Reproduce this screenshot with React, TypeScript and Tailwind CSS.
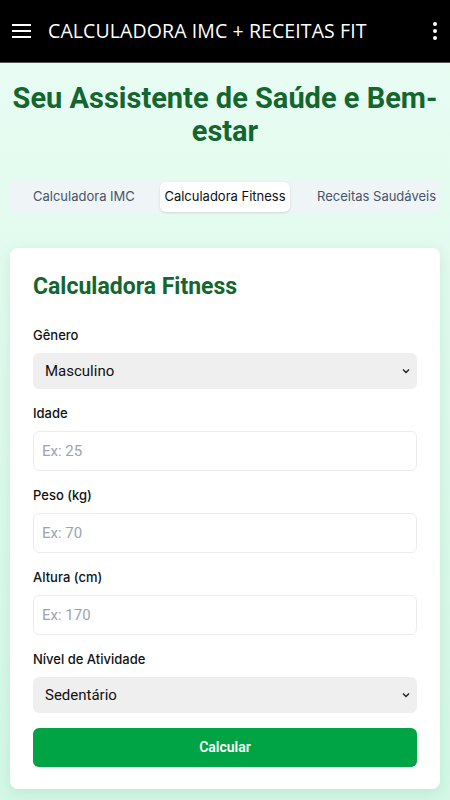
import React from "react";

function Field({ label, placeholder }: { label: string; placeholder: string }) {
  return (
    <div className="flex flex-col">
      <label className="text-[13px] font-medium text-[#111] mb-[10px] leading-[16px]" style={{ fontFamily: "Inter, sans-serif" }}>{label}</label>
      <div className="h-[40px] rounded-md border border-[#ececec] bg-white flex items-center px-[8px] text-[15px] text-[#9ca3af]" style={{ fontFamily: "Roboto, sans-serif" }}>
        {placeholder}
      </div>
    </div>
  );
}

function SelectBox({ label, value }: { label: string; value: string }) {
  return (
    <div className="flex flex-col">
      <label className="text-[13px] font-medium text-[#111] mb-[10px] leading-[16px]" style={{ fontFamily: "Inter, sans-serif" }}>{label}</label>
      <div className="h-[36px] rounded-md bg-[#efefef] flex items-center justify-between pl-[12px] pr-[6px] text-[15px] text-[#111]" style={{ fontFamily: "Roboto, sans-serif" }}>
        <span>{value}</span>
        <svg width="10" height="10" viewBox="0 0 10 10" fill="none" stroke="#222" strokeWidth="1.4"><path d="M2 3.5 L5 6.5 L8 3.5" /></svg>
      </div>
    </div>
  );
}

export default function App() {
  return (
    <div className="w-[450px] h-[800px] overflow-hidden bg-gradient-to-b from-[#e9fcf3] to-[#d4f8e6] flex flex-col">
      <div className="h-[63px] bg-black flex items-center border-b border-[#555] shrink-0">
        <svg className="ml-[12px]" width="19" height="14" viewBox="0 0 19 14"><rect x="0" y="0" width="19" height="2" fill="#fff" /><rect x="0" y="6" width="19" height="2" fill="#fff" /><rect x="0" y="12" width="19" height="2" fill="#fff" /></svg>
        <div className="ml-[17px] text-white text-[19.5px] tracking-[0.1px]" style={{ fontFamily: "'Open Sans', sans-serif" }}>CALCULADORA IMC + RECEITAS FIT</div>
        <div className="ml-auto mr-[13px] flex flex-col gap-[3px]">
          <span className="w-[4px] h-[4px] rounded-full bg-white" />
          <span className="w-[4px] h-[4px] rounded-full bg-white" />
          <span className="w-[4px] h-[4px] rounded-full bg-white" />
        </div>
      </div>
      <div className="px-[10px]">
        <h1 className="mt-[19px] -mx-[10px] text-center text-[29px] font-bold leading-[33px] text-[#14662f]" style={{ fontFamily: "Roboto, sans-serif" }}>
          Seu Assistente de Saúde e Bem-estar
        </h1>
        <div className="mt-[31px] h-[35px] bg-[#eff4f7] rounded-md flex items-center px-[3px] text-[13px] text-[#475569] overflow-hidden" style={{ fontFamily: "Inter, sans-serif" }}>
          <div className="w-[147px] shrink-0 pl-[20px] whitespace-nowrap">Calculadora IMC</div>
          <div className="w-[130px] shrink-0 h-[30px] bg-white rounded-md shadow-sm flex items-center justify-center text-[#111] whitespace-nowrap">Calculadora Fitness</div>
          <div className="shrink-0 pl-[27px] whitespace-nowrap">Receitas Saudáveis</div>
        </div>
        <div className="mt-[34px] bg-white rounded-lg shadow-[0_4px_14px_rgba(16,120,70,0.12)] px-[23px] pt-[25px] pb-[22px] flex flex-col">
          <h2 className="text-[23px] font-bold text-[#14662f] leading-[28px]" style={{ fontFamily: "Roboto, sans-serif" }}>Calculadora Fitness</h2>
          <div className="mt-[26px] flex flex-col gap-[16px]">
            <SelectBox label="Gênero" value="Masculino" />
            <Field label="Idade" placeholder="Ex: 25" />
            <Field label="Peso (kg)" placeholder="Ex: 70" />
            <Field label="Altura (cm)" placeholder="Ex: 170" />
            <SelectBox label="Nível de Atividade" value="Sedentário" />
          </div>
          <button className="mt-[15px] h-[39px] rounded-md bg-[#00a444] text-white text-[14px] font-semibold" style={{ fontFamily: "Roboto, sans-serif" }}>Calcular</button>
        </div>
      </div>
    </div>
  );
}
